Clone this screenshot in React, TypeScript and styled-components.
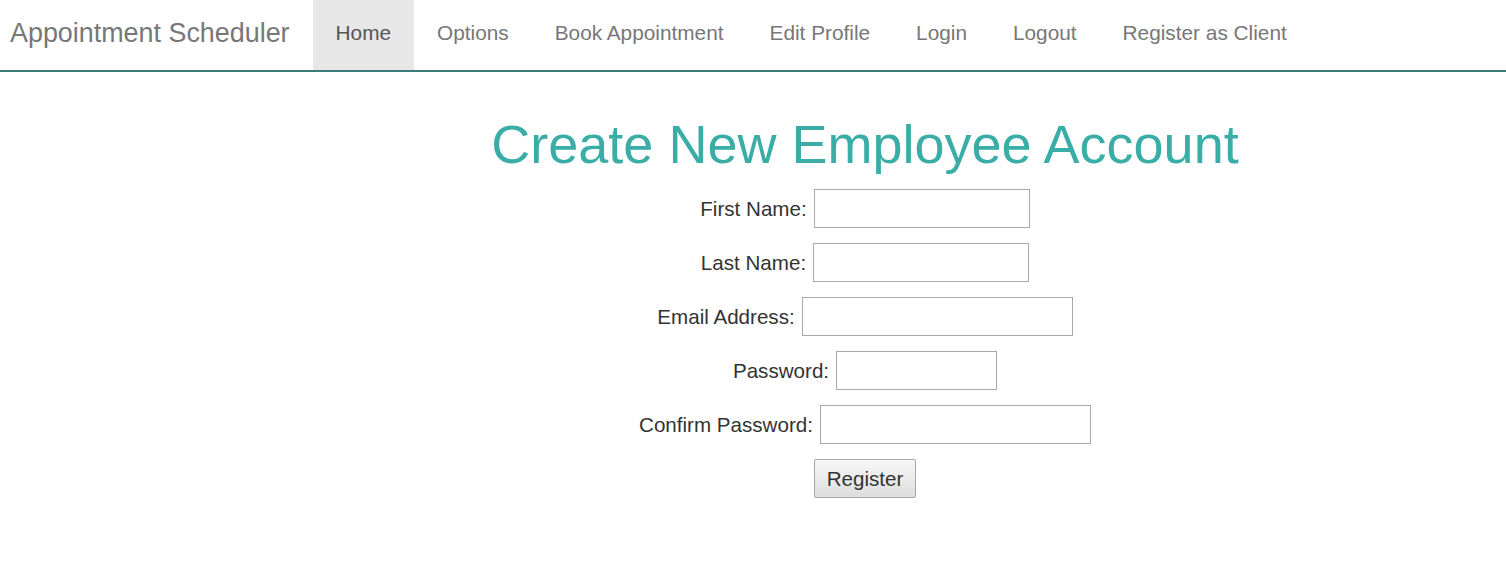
import React from "react";
import styled, { createGlobalStyle } from "styled-components";

const GlobalStyle = createGlobalStyle`
  html, body { margin: 0; padding: 0; background: #fff; }
  body { font-family: "Liberation Sans", Arial, sans-serif; color: #333; }
  * { box-sizing: border-box; }
`;

const NavBar = styled.nav`
  display: flex;
  align-items: stretch;
  height: 72px;
  border-bottom: 2px solid #3a7a77;
  background: #fff;
`;

const Brand = styled.a`
  display: flex;
  align-items: center;
  padding: 0 23px 3px 10px;
  font-size: 26.9px;
  color: #777;
  text-decoration: none;
  white-space: nowrap;
`;

const NavList = styled.ul`
  display: flex;
  margin: 0;
  padding: 0;
  list-style: none;
`;

const NavItem = styled.li<{ $active?: boolean }>`
  display: flex;
  align-items: center;
  padding: 0 23px 4px;
  font-size: 20.8px;
  color: ${(p) => (p.$active ? "#555" : "#777")};
  background: ${(p) => (p.$active ? "#e7e7e7" : "transparent")};
  white-space: nowrap;
  cursor: pointer;
`;

const Main = styled.main`
  padding-left: 224px;
  text-align: center;
`;

const Title = styled.h1`
  margin: 34px 0 0;
  font-size: 54px;
  font-weight: normal;
  line-height: 76px;
  color: #3aaea6;
`;

const Form = styled.form`
  display: flex;
  flex-direction: column;
  align-items: center;
  gap: 15px;
  margin-top: 7px;
`;

const Row = styled.div`
  display: flex;
  align-items: center;
  gap: 7px;
  font-size: 20.6px;
  color: #333;
`;

const Input = styled.input<{ $w: number }>`
  width: ${(p) => p.$w}px;
  height: 39px;
  border: 1px solid #a9a9a9;
  border-radius: 0;
  padding: 2px 4px;
  font-size: 18px;
  font-family: inherit;
  background: #fff;
`;

const Button = styled.button`
  width: 102px;
  height: 39px;
  border: 1px solid #a6a6a6;
  border-radius: 2px;
  background: linear-gradient(#f8f8f8, #dddddd);
  font-family: "Liberation Sans", Arial, sans-serif;
  font-size: 20.6px;
  color: #333;
  padding: 0;
  cursor: pointer;
`;

const fields = [
  { label: "First Name:", w: 216, type: "text" },
  { label: "Last Name:", w: 216, type: "text" },
  { label: "Email Address:", w: 271, type: "text" },
  { label: "Password:", w: 161, type: "password" },
  { label: "Confirm Password:", w: 271, type: "password" },
];

const navItems = [
  "Home",
  "Options",
  "Book Appointment",
  "Edit Profile",
  "Login",
  "Logout",
  "Register as Client",
];

export default function App() {
  return (
    <>
      <GlobalStyle />
      <NavBar>
        <Brand href="#">Appointment Scheduler</Brand>
        <NavList>
          {navItems.map((n, i) => (
            <NavItem key={n} $active={i === 0}>
              {n}
            </NavItem>
          ))}
        </NavList>
      </NavBar>
      <Main>
        <Title>Create New Employee Account</Title>
        <Form onSubmit={(e) => e.preventDefault()}>
          {fields.map((f) => (
            <Row key={f.label}>
              <label>{f.label}</label>
              <Input $w={f.w} type={f.type} />
            </Row>
          ))}
          <Button type="submit">Register</Button>
        </Form>
      </Main>
    </>
  );
}
